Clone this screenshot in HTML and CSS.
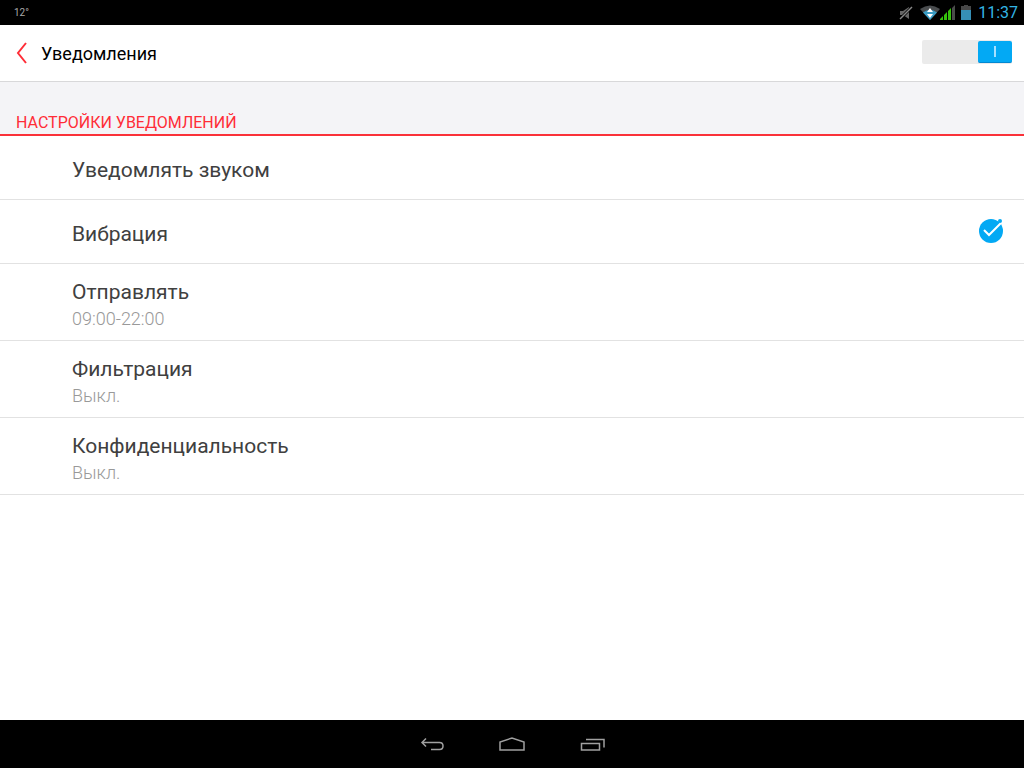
FILE: index.html
```html
<!DOCTYPE html>
<html lang="ru">
<head>
    <meta charset="UTF-8">
    <meta name="viewport" content="width=device-width, initial-scale=1.0">
    <title>Уведомления</title>
    <link rel="stylesheet" href="styles.css">
</head>
<body>

    <div class="status-bar">
        <span class="temperature">12°</span>
        <div class="status-icons">
            <svg class="mute-icon" width="14" height="16" viewBox="0 0 14 16">
                <path d="M1 6h3l6-4v12l-6-4H1z" fill="#666"/>
                <path d="M13 2L1 14" stroke="#000" stroke-width="3"/>
                <path d="M13 2L1 14" stroke="#888" stroke-width="1.4"/>
            </svg>
            <svg class="wifi-icon" width="20" height="16" viewBox="0 0 20 16">
                <path d="M0 4Q10-3 20 4L10 15z" fill="#4a4d4f"/>
                <path d="M3 7.500Q10 2 17 7.500L10 15z" fill="#3a9cc4"/>
                <path d="M10 3L13 7H7zM7 9H13L10 13z" fill="#fff"/>
            </svg>
            <svg class="signal-icon" width="16" height="16" viewBox="0 0 16 16">
                <path d="M0 15v-1l3-3v4zM4 15v-5l3-3v8zM8 15V6l3-3v12z" fill="#35c20c"/>
                <path d="M12 15V3l3-3v15z" fill="#4a4d4a"/>
            </svg>
            <svg class="battery-icon" width="10" height="16" viewBox="0 0 10 16">
                <path d="M3 0h4v1h3v4H0V1h3z" fill="#484848"/>
                <path d="M0 5h10v10H0z" fill="#368fb5"/>
            </svg>
            <span class="clock">11:37</span>
        </div>
    </div>

    <header>
        <button class="back-btn" type="button" aria-label="Назад">
            <svg width="12" height="22" viewBox="0 0 12 22" fill="none" stroke="#ff2d37" stroke-width="2">
                <path d="M10 1L2 11l8 10"/>
            </svg>
        </button>
        <h1>Уведомления</h1>
        <label class="switch">
            <input type="checkbox" aria-label="Уведомления" checked>
            <span class="thumb"></span>
        </label>
    </header>

    <main>
        <h2>Настройки уведомлений</h2>
        <ul class="settings">
            <li>
                <label class="row">
                    <span class="title">Уведомлять звуком</span>
                    <span class="check">
                        <input type="checkbox">
                        <svg width="26" height="26" viewBox="0 0 26 26">
                            <circle cx="13" cy="13" r="12" fill="#03a9f4"/>
                            <path d="M6 12l5 5L23 5" fill="none" stroke="#fff" stroke-width="2"/>
                            <circle cx="22" cy="3" r="2" fill="#03a9f4"/>
                        </svg>
                    </span>
                </label>
            </li>
            <li>
                <label class="row">
                    <span class="title">Вибрация</span>
                    <span class="check">
                        <input type="checkbox" checked>
                        <svg width="26" height="26" viewBox="0 0 26 26">
                            <circle cx="13" cy="13" r="12" fill="#03a9f4"/>
                            <path d="M6 12l5 5L23 5" fill="none" stroke="#fff" stroke-width="2"/>
                            <circle cx="22" cy="3" r="2" fill="#03a9f4"/>
                        </svg>
                    </span>
                </label>
            </li>
            <li>
                <button class="row tall" type="button">
                    <span class="title">Отправлять</span>
                    <span class="value">09:00-22:00</span>
                </button>
            </li>
            <li>
                <button class="row tall" type="button">
                    <span class="title">Фильтрация</span>
                    <span class="value">Выкл.</span>
                </button>
            </li>
            <li>
                <button class="row tall" type="button">
                    <span class="title">Конфиденциальность</span>
                    <span class="value">Выкл.</span>
                </button>
            </li>
        </ul>
    </main>

    <nav>
        <button type="button" aria-label="Назад">
            <svg width="26" height="16" viewBox="0 0 26 16">
                <path d="M7 2.500L3 6.500l4 4M3 6.500h17.500q3.500 0 3.500 3.500t-3.500 3.500H12"/>
            </svg>
        </button>
        <button type="button" aria-label="Домой">
            <svg width="26" height="16" viewBox="0 0 26 16">
                <path d="M1 14V6l12-4 12 4v8z"/>
            </svg>
        </button>
        <button type="button" aria-label="Недавние">
            <svg width="26" height="16" viewBox="0 0 26 16">
                <path d="M2.500 7.500h18v6.500h-18zM7 3.500h18v8"/>
            </svg>
        </button>
    </nav>

</body>
</html>
```
FILE: styles.css
```css
* {
    box-sizing: border-box;
}

body {
    display: flex;
    flex-direction: column;
    min-height: 100vh;
    margin: 0;
    background-color: #fff;
    font-family: Roboto, sans-serif;
}

button {
    padding: 0;
    border: none;
    background: none;
    font-family: inherit;
    cursor: pointer;
}

svg {
    display: block;
}

.status-bar {
    display: flex;
    align-items: center;
    justify-content: space-between;
    height: 25px;
    padding: 0 6px 0 14px;
    background-color: #000;
}

.temperature {
    color: #aaa;
    font-size: 10px;
}

.status-icons {
    display: flex;
    align-items: center;
}

.mute-icon {
    margin-right: 7px;
}

.signal-icon {
    margin-right: 5px;
}

.battery-icon {
    margin-right: 7px;
}

.clock {
    color: #33b5e5;
    font-size: 16px;
}

header {
    display: flex;
    align-items: center;
    height: 57px;
    padding: 0 12px 0 16px;
    border-bottom: 1px solid #d8d8da;
}

h1 {
    flex: 1;
    margin: 0 0 0 13px;
    color: #000;
    font-size: 18px;
    font-weight: 400;
}

.switch {
    display: grid;
    width: 90px;
    height: 24px;
    margin-bottom: 2px;
    border-radius: 2px;
    background-color: #ebebeb;
    cursor: pointer;
}

.switch input,
.check input {
    grid-area: 1 / 1;
    width: 100%;
    height: 100%;
    margin: 0;
    appearance: none;
}

.thumb {
    grid-area: 1 / 1;
    display: grid;
    place-items: center;
    width: 34px;
    height: 22px;
    margin-top: 1px;
    border-bottom: 1px solid #0288d1;
    border-radius: 2px;
    background-color: #aaa;
}

.thumb::before {
    content: "";
    width: 2px;
    height: 11px;
    background-color: #a6e0ff;
}

.switch input:checked + .thumb {
    justify-self: end;
    background-color: #03a9f4;
}

main {
    flex: 1;
}

h2 {
    margin: 0;
    padding: 31px 16px 1px;
    border-bottom: 2px solid #fa3139;
    background-color: #f4f4f7;
    color: #ff2d37;
    font-size: 16px;
    font-weight: 400;
    line-height: 20px;
    text-transform: uppercase;
}

.settings {
    margin: 0;
    padding: 0;
    list-style: none;
}

.settings li {
    border-bottom: 1px solid #e2e2e2;
}

.row {
    display: flex;
    align-items: center;
    justify-content: space-between;
    width: 100%;
    height: 63px;
    padding: 4px 20px 0 72px;
    cursor: pointer;
}

.row.tall {
    flex-direction: column;
    align-items: flex-start;
    justify-content: center;
    height: 76px;
    padding-top: 6px;
}

.title {
    color: #404040;
    font-size: 21px;
    line-height: 28px;
}

.value {
    color: #999;
    font-size: 18px;
    font-weight: 300;
    line-height: 26px;
}

.check {
    display: grid;
    margin-bottom: 6px;
}

.check svg {
    grid-area: 1 / 1;
    visibility: hidden;
}

.check input:checked + svg {
    visibility: visible;
}

nav {
    display: flex;
    align-items: center;
    justify-content: center;
    gap: 54px;
    height: 48px;
    background-color: #000;
}

nav svg {
    fill: none;
    stroke: #a0a0a0;
    stroke-width: 1.5;
}
```
